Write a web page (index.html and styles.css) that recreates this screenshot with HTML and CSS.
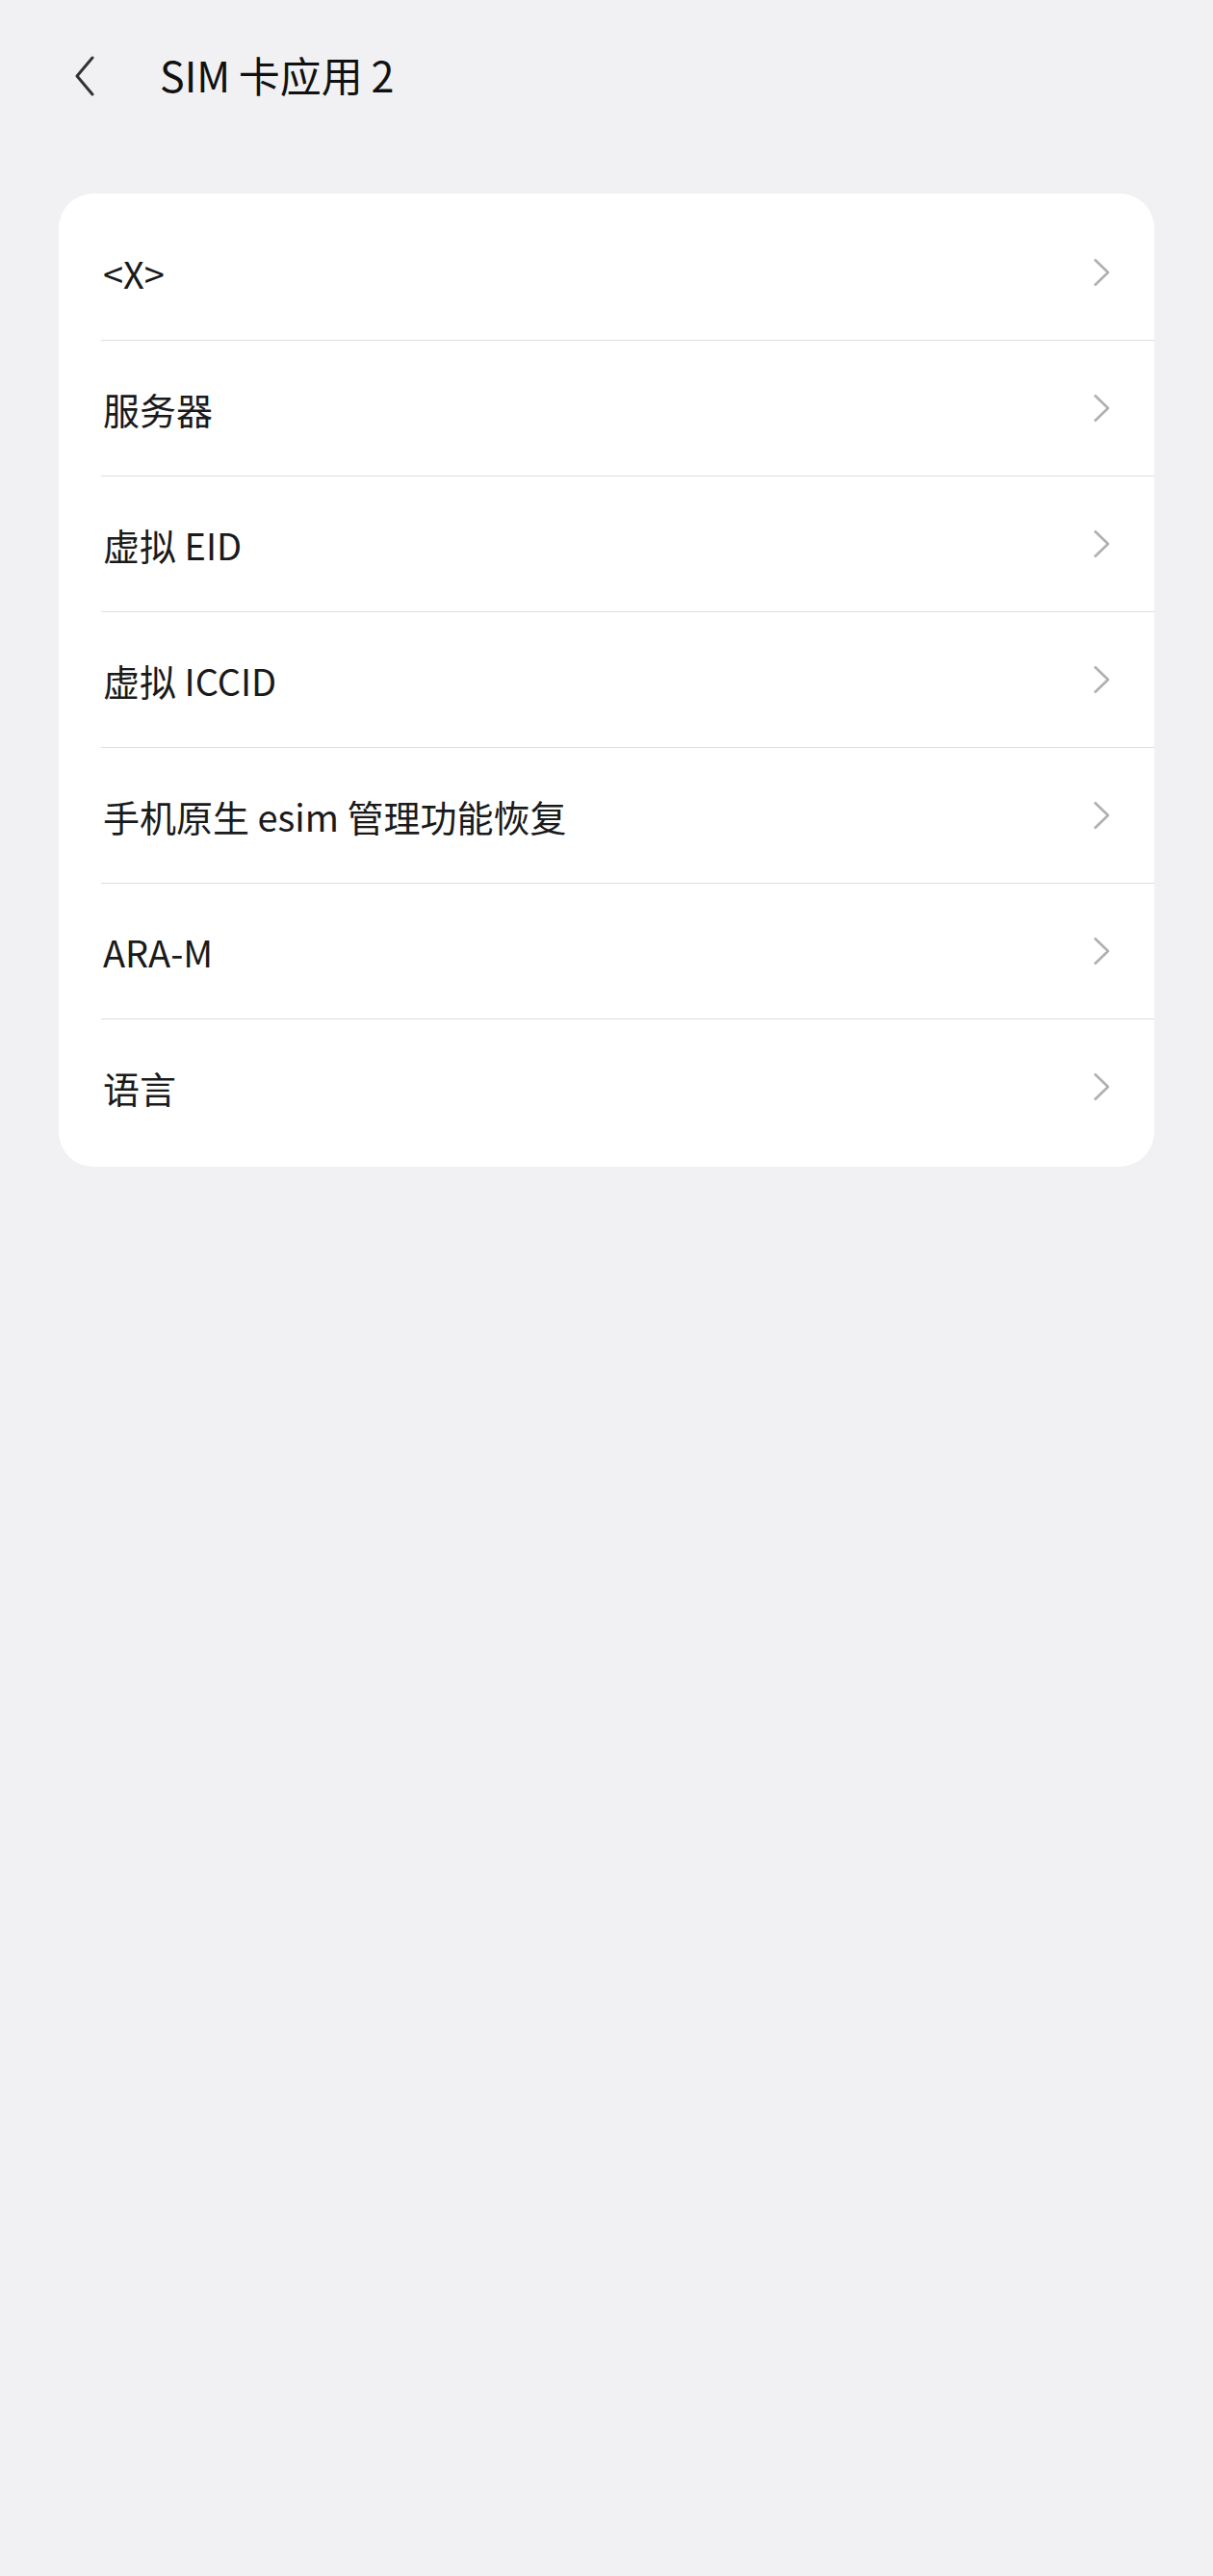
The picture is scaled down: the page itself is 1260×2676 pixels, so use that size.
FILE: index.html
```html
<!DOCTYPE html>
<html lang="zh-CN">
<head>
<meta charset="utf-8">
<title>SIM卡应用2</title>
<link rel="stylesheet" href="styles.css">
</head>
<body>
<div class="page">
  <header class="topbar">
    <span class="back">
      <svg width="24" height="42" viewBox="0 0 24 42"><path d="M20 2 L4 21 L20 40" fill="none" stroke="#333" stroke-width="3" stroke-linecap="round" stroke-linejoin="round"/></svg>
    </span>
    <h1 class="title">SIM 卡应用 2</h1>
  </header>
  <section class="card">
    <div class="row"><span class="label">&lt;X&gt;</span><svg class="chev" width="18" height="30" viewBox="0 0 18 30"><path d="M2 1.5 L16 15 L2 28.5" fill="none" stroke="#b0b0b0" stroke-width="2.6" stroke-linejoin="round"/></svg></div>
    <div class="row"><span class="label">服务器</span><svg class="chev" width="18" height="30" viewBox="0 0 18 30"><path d="M2 1.5 L16 15 L2 28.5" fill="none" stroke="#b0b0b0" stroke-width="2.6" stroke-linejoin="round"/></svg></div>
    <div class="row"><span class="label">虚拟 EID</span><svg class="chev" width="18" height="30" viewBox="0 0 18 30"><path d="M2 1.5 L16 15 L2 28.5" fill="none" stroke="#b0b0b0" stroke-width="2.6" stroke-linejoin="round"/></svg></div>
    <div class="row"><span class="label">虚拟 ICCID</span><svg class="chev" width="18" height="30" viewBox="0 0 18 30"><path d="M2 1.5 L16 15 L2 28.5" fill="none" stroke="#b0b0b0" stroke-width="2.6" stroke-linejoin="round"/></svg></div>
    <div class="row"><span class="label">手机原生 esim 管理功能恢复</span><svg class="chev" width="18" height="30" viewBox="0 0 18 30"><path d="M2 1.5 L16 15 L2 28.5" fill="none" stroke="#b0b0b0" stroke-width="2.6" stroke-linejoin="round"/></svg></div>
    <div class="row"><span class="label">ARA-M</span><svg class="chev" width="18" height="30" viewBox="0 0 18 30"><path d="M2 1.5 L16 15 L2 28.5" fill="none" stroke="#b0b0b0" stroke-width="2.6" stroke-linejoin="round"/></svg></div>
    <div class="row"><span class="label">语言</span><svg class="chev" width="18" height="30" viewBox="0 0 18 30"><path d="M2 1.5 L16 15 L2 28.5" fill="none" stroke="#b0b0b0" stroke-width="2.6" stroke-linejoin="round"/></svg></div>
  </section>
</div>
</body>
</html>
```

FILE: styles.css
```css
html, body {
  margin: 0;
  padding: 0;
  background: #f1f1f3;
}
body {
  font-family: "Noto Sans CJK SC", "Noto Sans", sans-serif;
  color: #1a1a1a;
  min-height: 2676px;
}
.page {
  display: flex;
  flex-direction: column;
}
.topbar {
  height: 160px;
  display: flex;
  align-items: center;
  padding-left: 76px;
  padding-bottom: 2px;
  box-sizing: border-box;
}
.back {
  display: flex;
  width: 24px;
  height: 42px;
}
.title {
  margin: 0 0 4px 66px;
  font-size: 43px;
  font-weight: 400;
  word-spacing: -1px;
  color: #111;
}
.card {
  margin: 41px 61px 0 61px;
  background: #fff;
  border-radius: 36px;
  padding: 12px 0 13px 0;
  display: flex;
  flex-direction: column;
}
.row {
  height: 140px;
  margin-left: 44px;
  padding-left: 2px;
  padding-right: 46px;
  display: flex;
  align-items: center;
  justify-content: space-between;
}
.row + .row {
  border-top: 1px solid #dedede;
}
.label {
  font-size: 38px;
  font-weight: 400;
  color: #1a1a1a;
}
.chev {
  display: block;
}
```
